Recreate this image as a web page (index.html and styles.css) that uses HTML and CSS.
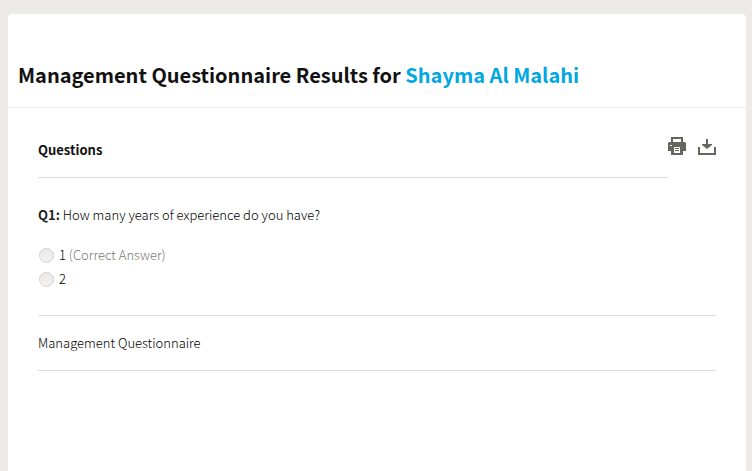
FILE: index.html
```html
<!DOCTYPE html>
<html lang="en">
<head>
	<meta charset="UTF-8">
	<title>Management Questionnaire Results</title>
	<link rel="stylesheet" href="styles.css">
</head>
<body>
	<div class="panel">
		<div class="panel-header">
			<h1>Management Questionnaire Results for <a href="#">Shayma Al Malahi</a></h1>
		</div>
		<div class="panel-body">
			<div class="section-head">
				<h2>Questions</h2>
				<div class="btn-group">
					<button type="button" class="btn-icon" aria-label="Print">
						<svg width="18" height="18" viewBox="0 0 18 18">
							<path fill="#67665e" fill-rule="evenodd" d="M3 0h12v5h2l1 1v8h-3v4H3v-4H0V6l1-1h2zM5 2v3h8V2zM2 8v1h2V8zM6 10v6h6v-6z"/>
							<path fill="#67665e" d="M7 11h4v1H7zM7 13h4v1H7z"/>
						</svg>
					</button>
					<button type="button" class="btn-icon" aria-label="Download">
						<svg width="18" height="18" viewBox="0 0 18 18">
							<path fill="#67665e" d="M8 2h2v5h4v1l-5 4-5-4V7h4zM0 10h2v6h14v-6h2v8H0z"/>
						</svg>
					</button>
				</div>
			</div>
			<form class="question">
				<p class="question-text"><b>Q1:</b> How many years of experience do you have?</p>
				<div class="answer">
					<input type="radio" name="q1" id="q1-1">
					<label for="q1-1">1 <span class="correct">(Correct Answer)</span></label>
				</div>
				<div class="answer">
					<input type="radio" name="q1" id="q1-2">
					<label for="q1-2">2</label>
				</div>
			</form>
			<p class="panel-name">Management Questionnaire</p>
		</div>
	</div>
</body>
</html>
```

FILE: styles.css
```css
* {
	box-sizing: border-box;
}
body {
	display: flex;
	min-height: 100vh;
	margin: 0;
	padding: 14px 6px 0 8px;
	background: #ecebe9;
	color: #000;
	font-family: "Noto Sans CJK SC", "Open Sans", sans-serif;
	font-size: 13px;
	font-weight: 300;
	line-height: 24px;
}
h1, h2, p {
	margin: 0;
}
b {
	color: #222;
	font-weight: 700;
}
.panel {
	flex: 1;
	background: #fff;
	border-radius: 4px 4px 0 0;
}
.panel-header {
	padding: 45px 10px 16px;
	border-bottom: 1px solid #ecebe9;
}
.panel-header h1 {
	color: #111;
	font-size: 20px;
	line-height: 32px;
}
.panel-header a {
	color: #00a7e1;
	text-decoration: none;
}
.panel-body {
	padding: 29px 30px;
}
.section-head {
	display: flex;
}
.section-head h2 {
	flex: 1;
	padding: 1px 0 15px;
	border-bottom: 1px solid #dcdcdc;
	color: #111;
	font-size: 13px;
	line-height: 24px;
}
.btn-group {
	display: flex;
	align-items: flex-start;
	gap: 12px;
}
.btn-icon {
	padding: 0;
	border: 0;
	background: none;
	cursor: pointer;
}
.btn-icon svg {
	display: block;
}
.question {
	padding: 25px 0 24px;
	border-bottom: 1px solid #dcdcdc;
}
.question-text {
	margin-bottom: 16px;
}
.answer {
	display: flex;
	align-items: center;
	gap: 4px;
}
.answer input {
	appearance: none;
	width: 15px;
	height: 15px;
	margin: 1px;
	border: 1px solid #d3d1cf;
	border-radius: 50%;
	background: linear-gradient(#e9e8e6, #f4f3f2);
}
.correct {
	color: #777;
}
.panel-name {
	padding: 15px 0;
	border-bottom: 1px solid #dcdcdc;
}
```
